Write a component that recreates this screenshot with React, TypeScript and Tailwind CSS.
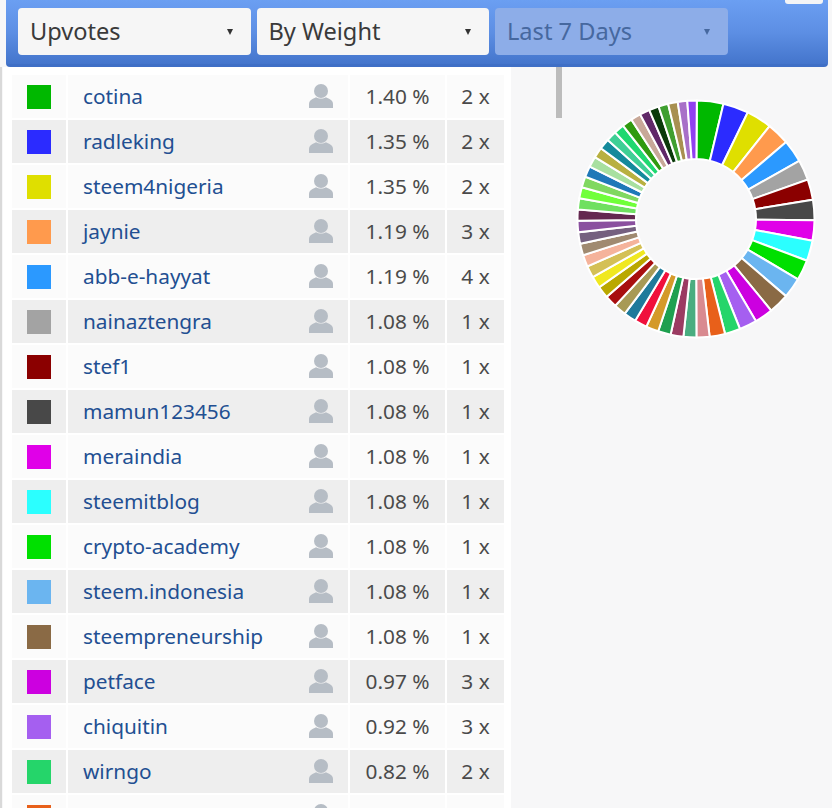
import React from "react";

const rows: [string, string, string, string][] = [
  ["#00b800", "cotina", "1.40 %", "2 x"],
  ["#2b2bff", "radleking", "1.35 %", "2 x"],
  ["#dfdf00", "steem4nigeria", "1.35 %", "2 x"],
  ["#ff9a4d", "jaynie", "1.19 %", "3 x"],
  ["#2b99ff", "abb-e-hayyat", "1.19 %", "4 x"],
  ["#a3a3a3", "nainaztengra", "1.08 %", "1 x"],
  ["#8b0000", "stef1", "1.08 %", "1 x"],
  ["#484848", "mamun123456", "1.08 %", "1 x"],
  ["#e000e8", "meraindia", "1.08 %", "1 x"],
  ["#2bffff", "steemitblog", "1.08 %", "1 x"],
  ["#00e000", "crypto-academy", "1.08 %", "1 x"],
  ["#6bb5f0", "steem.indonesia", "1.08 %", "1 x"],
  ["#8a6a45", "steempreneurship", "1.08 %", "1 x"],
  ["#cc00e0", "petface", "0.97 %", "3 x"],
  ["#a55ff0", "chiquitin", "0.92 %", "3 x"],
  ["#25d56a", "wirngo", "0.82 %", "2 x"],
  ["#e8601a", "sapwood", "0.82 %", "2 x"],
];

const rest = [
  "#d98a90", "#4aad80", "#9b3b62", "#1fa050", "#d49a2a", "#f0103c", "#1f7a9b", "#a89a55",
  "#a80f0f", "#baa800", "#f0e820", "#d4c055", "#f5b39b", "#a08a70", "#75607f", "#8a509f", "#642850",
  "#6fe060", "#70ff3a", "#80d860", "#1f78b8", "#a8e0a0", "#b8b040", "#158a9b", "#3fcf95", "#1fd870",
  "#309a10", "#c8a898", "#602868", "#0a3a0a", "#3f9f30", "#a89050", "#a870c8", "#9040f0",
];

const head = [13, 12.5, 12.5, 11.1, 11.1, 10, 10, 10, 10, 10, 10, 10, 10, 9, 8.6, 7.6, 7.6];
const headSum = head.reduce((s, a) => s + a, 0);
const restRaw = rest.map((_, i) => 6.5 - (1.8 * i) / (rest.length - 1));
const restSum = restRaw.reduce((s, a) => s + a, 0);
const slices: { c: string; a: number }[] = [
  ...head.map((a, i) => ({ c: rows[i][0], a })),
  ...rest.map((c, i) => ({ c, a: (restRaw[i] * (360 - headSum)) / restSum })),
];

function Donut() {
  const cx = 120;
  const cy = 120;
  const R = 118.5;
  const r = 60;
  let cur = 0.4;
  const pt = (rad: number, deg: number) => {
    const t = (deg * Math.PI) / 180;
    return `${(cx + rad * Math.sin(t)).toFixed(2)} ${(cy - rad * Math.cos(t)).toFixed(2)}`;
  };
  return (
    <svg width="240" height="240" viewBox="0 0 240 240" className="block">
      {slices.map((s, i) => {
        const a0 = cur;
        const a1 = cur + s.a;
        cur = a1;
        return (
          <path
            key={i}
            d={`M${pt(r, a0)} L${pt(R, a0)} A${R} ${R} 0 0 1 ${pt(R, a1)} L${pt(r, a1)} A${r} ${r} 0 0 0 ${pt(r, a0)} Z`}
            fill={s.c}
            stroke="#ffffff"
            strokeWidth="2"
          />
        );
      })}
    </svg>
  );
}

function Person() {
  return (
    <svg width="24" height="24" viewBox="0 0 24 24" className="block">
      <circle cx="12" cy="7" r="7" fill="#b6bdc5" />
      <path d="M0 24 V20 C0 15.5 5 14.6 7 13.2 C9.5 15 14.5 15 17 13.2 C19 14.6 24 15.5 24 20 V24 Z" fill="#b6bdc5" />
    </svg>
  );
}

function Select({ label, disabled }: { label: string; disabled?: boolean }) {
  return (
    <div
      className={
        "w-[232.5px] h-[47px] rounded-[4px] flex items-center justify-between pl-[12px] pr-[18px] pt-[1px] text-[23.6px] " +
        (disabled ? "bg-[#8dade8] text-[#46689f]" : "bg-[#f6f6f6] text-[#3a3a3a]")
      }
    >
      <span>{label}</span>
      <span
        className={
          "w-0 h-0 border-l-[3px] border-r-[3px] border-t-[6px] border-l-transparent border-r-transparent " +
          (disabled ? "border-t-[#46689f]" : "border-t-[#333333]")
        }
      />
    </div>
  );
}

export default function App() {
  return (
    <div
      className="w-[832px] h-[808px] overflow-hidden bg-[#f7f7f8] flex flex-col"
      style={{ fontFamily: '"Noto Sans", "Open Sans", sans-serif' }}
    >
      <div className="ml-[6px] mr-[4px] h-[67px] shrink-0 rounded-b-[4px] bg-gradient-to-b from-[#6b9ff2] via-[#5d8fe4] to-[#4475cc] border-b-[3px] border-[#3f6fc6] flex pl-[12px] pt-[8px] gap-[6px] relative">
        <Select label="Upvotes" />
        <Select label="By Weight" />
        <Select label="Last 7 Days" disabled />
        <div className="absolute right-[5px] top-0 w-[38px] h-[4px] bg-[#f3f4f6] rounded-b-[3px]" />
      </div>
      <div className="flex flex-1 min-h-0">
        <div className="w-[2px] bg-[#d9d9d9] shrink-0" />
        <div className="w-[508px] shrink-0 ml-[1px] bg-[#ffffff] pl-[9px] pt-[8px] h-[900px]">
          {rows.map((row, i) => {
            const bg = i % 2 ? "bg-[#eeeeee]" : "bg-[#fbfbfb]";
            return (
              <div key={i} className="flex h-[43px] mb-[2px] gap-[2px] w-[492px] text-[20.8px] leading-[42px]">
                <div className={"w-[54px] shrink-0 flex items-center justify-center " + bg}>
                  <div className="w-[24px] h-[24px]" style={{ background: row[0] }} />
                </div>
                <div className={"w-[280px] shrink-0 flex items-center justify-between pl-[15px] pr-[15px] pb-[1px] text-[#224f92] " + bg}>
                  <span>{row[1]}</span>
                  <Person />
                </div>
                <div className={"w-[95px] shrink-0 text-center text-[#4a4a4a] " + bg}>{row[2]}</div>
                <div className={"flex-1 text-center text-[#4a4a4a] " + bg}>{row[3]}</div>
              </div>
            );
          })}
        </div>
        <div className="flex-1 relative">
          <div className="ml-[45px] w-[6px] h-[51px] bg-[#bcbcbc]" />
          <div className="absolute left-[65px] top-[32px]">
            <Donut />
          </div>
        </div>
      </div>
    </div>
  );
}
